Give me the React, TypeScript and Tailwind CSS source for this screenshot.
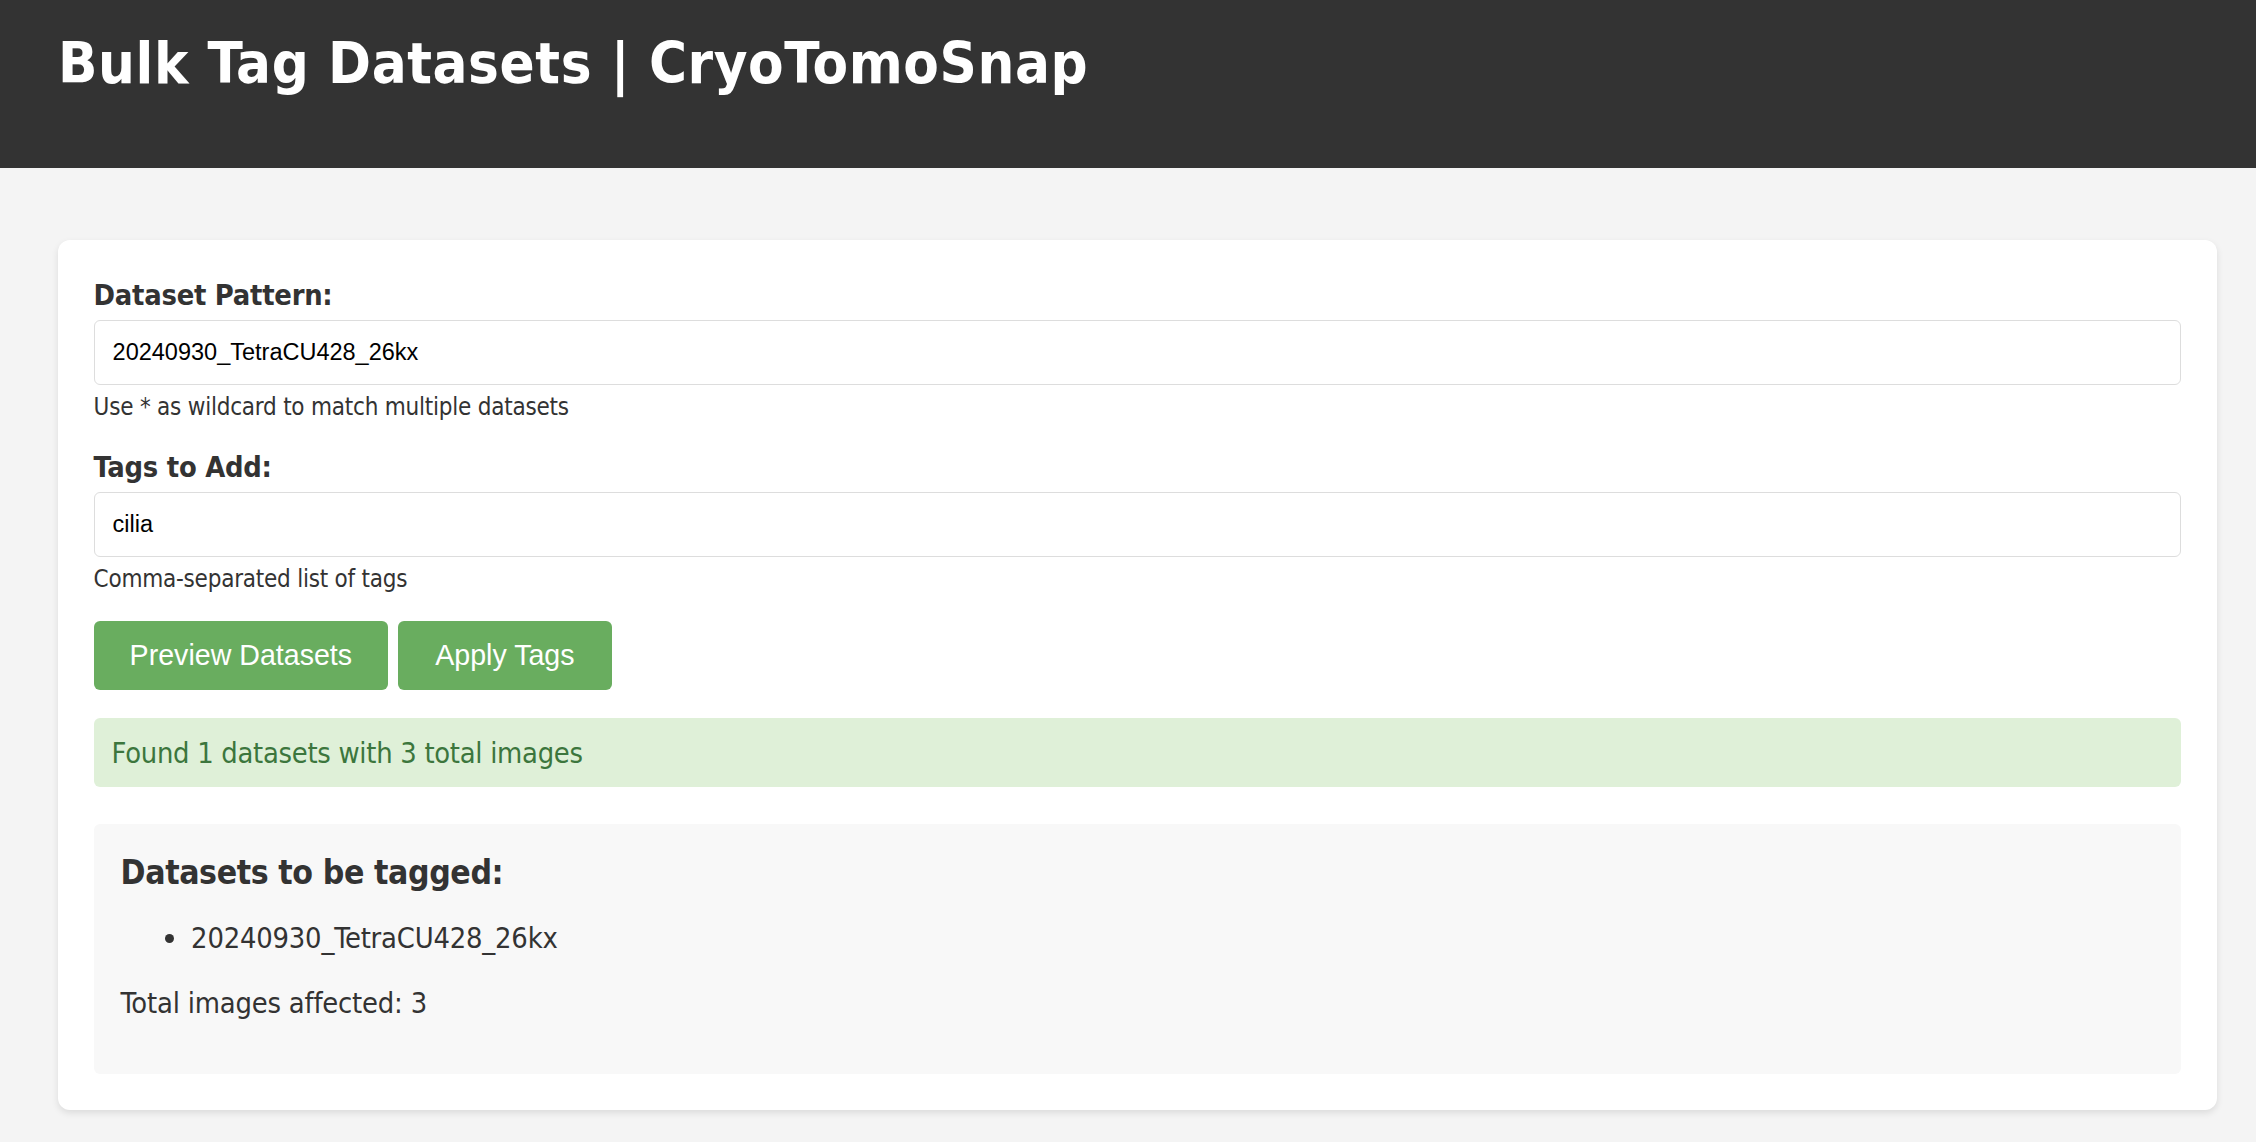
const sans = "font-['DejaVu_Sans_Condensed','DejaVu_Sans',sans-serif]";
const arial = "font-['Liberation_Sans',Arial,sans-serif]";

function Field({ label, value, help }: { label: string; value: string; help: string }) {
  return (
    <div>
      <label className="block text-[28.8px] leading-[34px] font-bold tracking-[-0.25px]">{label}</label>
      <input
        readOnly
        value={value}
        className={`${arial} mt-[8px] block h-[65px] w-full rounded-[6px] border border-[#ddd] bg-white px-[18px] text-[23.5px] text-black outline-none`}
      />
      <p className="mt-[8px] text-[24px] leading-[28px] tracking-[-0.23px]">{help}</p>
    </div>
  );
}

export default function App() {
  return (
    <div className={`${sans} min-h-screen bg-[#f4f4f4] text-[#333]`}>
      <header className="h-[168px] bg-[#333] px-[58px] pt-[35px]">
        <h1 className="text-[57.6px] leading-[57.6px] font-bold tracking-[0.6px] text-white">
          Bulk Tag Datasets | CryoTomoSnap
        </h1>
      </header>

      <main className="pt-[72px] pb-[33px] pl-[57.6px] pr-[39px]">
        <div className="rounded-[12px] bg-white px-[36px] pt-[38px] pb-[36px] shadow-[0_3px_7px_rgba(0,0,0,0.1)]">
          <Field label="Dataset Pattern:" value="20240930_TetraCU428_26kx" help="Use * as wildcard to match multiple datasets" />
          <div className="mt-[29px]">
            <Field label="Tags to Add:" value="cilia" help="Comma-separated list of tags" />
          </div>

          <div className="mt-[28px] flex gap-[9.6px]">
            <button className={`${arial} flex h-[69px] items-center rounded-[6px] bg-[#69ad5f] px-[36px] text-[28.6px] text-white`}>
              Preview Datasets
            </button>
            <button className={`${arial} flex h-[69px] items-center rounded-[6px] bg-[#69ad5f] px-[37.5px] text-[28.6px] text-white`}>
              Apply Tags
            </button>
          </div>

          <div className="mt-[28px] flex h-[69px] items-center rounded-[6px] bg-[#dff0d8] px-[18px] pt-[2px] text-[28.8px] tracking-[-0.28px] text-[#3c763d]">
            Found 1 datasets with 3 total images
          </div>

          <div className="mt-[37px] rounded-[6px] bg-[#f8f8f8] px-[27px] pt-[28.7px] pb-[53.6px]">
            <h3 className="text-[33.5px] leading-[40px] font-bold tracking-[-0.4px]">Datasets to be tagged:</h3>
            <ul className="mt-[29.3px] pl-[44.5px]">
              <li className="flex h-[34px] items-center text-[28.8px] tracking-[-0.19px]">
                <span className="mr-[17px] h-[9px] w-[9px] rounded-full bg-[#333]" />
                20240930_TetraCU428_26kx
              </li>
            </ul>
            <p className="mt-[30.4px] text-[28.8px] leading-[34px] tracking-[-0.19px]">Total images affected: 3</p>
          </div>
        </div>
      </main>
    </div>
  );
}
